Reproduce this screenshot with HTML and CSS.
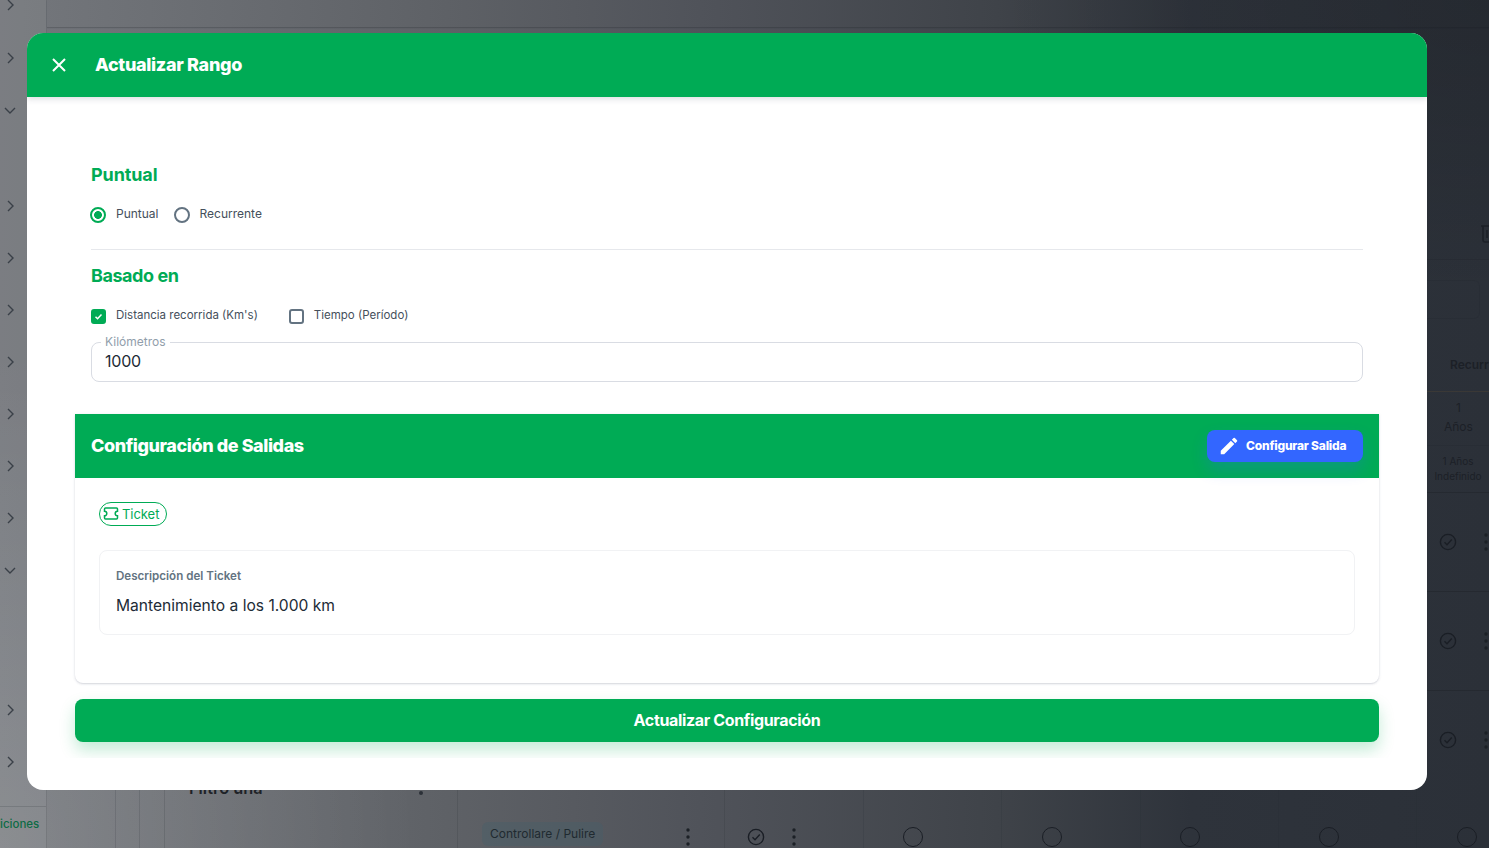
FILE: index.html
```html
<!DOCTYPE html>
<html lang="es">
<head>
<meta charset="utf-8">
<title>Actualizar Rango</title>
<link rel="stylesheet" href="styles.css">
</head>
<body>
<div class="backdrop-page">
  <div class="bg-topbar"></div>
  <aside class="side">
    <svg class="chev c1" viewBox="0 0 10 14"><path d="M3 2l5 5-5 5"/></svg>
    <svg class="chev c2" viewBox="0 0 10 14"><path d="M3 2l5 5-5 5"/></svg>
    <svg class="chev down c3" viewBox="0 0 14 10"><path d="M2 3l5 5 5-5"/></svg>
    <svg class="chev c4" viewBox="0 0 10 14"><path d="M3 2l5 5-5 5"/></svg>
    <svg class="chev c5" viewBox="0 0 10 14"><path d="M3 2l5 5-5 5"/></svg>
    <svg class="chev c6" viewBox="0 0 10 14"><path d="M3 2l5 5-5 5"/></svg>
    <svg class="chev c7" viewBox="0 0 10 14"><path d="M3 2l5 5-5 5"/></svg>
    <svg class="chev c8" viewBox="0 0 10 14"><path d="M3 2l5 5-5 5"/></svg>
    <svg class="chev c9" viewBox="0 0 10 14"><path d="M3 2l5 5-5 5"/></svg>
    <svg class="chev c10" viewBox="0 0 10 14"><path d="M3 2l5 5-5 5"/></svg>
    <svg class="chev down c11" viewBox="0 0 14 10"><path d="M2 3l5 5 5-5"/></svg>
    <svg class="chev c12" viewBox="0 0 10 14"><path d="M3 2l5 5-5 5"/></svg>
    <svg class="chev c13" viewBox="0 0 10 14"><path d="M3 2l5 5-5 5"/></svg>
    <div class="side-foot">iciones</div>
  </aside>
  <span class="bg-text filtro">Filtro una</span>
  <span class="bg-dot"></span>
  <span class="bg-chip">Controllare / Pulire</span>
  <svg class="kebab k1" viewBox="0 0 4 18"><circle cx="2" cy="2" r="1.7"/><circle cx="2" cy="9" r="1.7"/><circle cx="2" cy="16" r="1.7"/></svg>
  <svg class="kebab k2" viewBox="0 0 4 18"><circle cx="2" cy="2" r="1.7"/><circle cx="2" cy="9" r="1.7"/><circle cx="2" cy="16" r="1.7"/></svg>
  <svg class="kebab k3" viewBox="0 0 4 18"><circle cx="2" cy="2" r="1.7"/><circle cx="2" cy="9" r="1.7"/><circle cx="2" cy="16" r="1.7"/></svg>
  <svg class="kebab k4" viewBox="0 0 4 18"><circle cx="2" cy="2" r="1.7"/><circle cx="2" cy="9" r="1.7"/><circle cx="2" cy="16" r="1.7"/></svg>
  <svg class="kebab k5" viewBox="0 0 4 18"><circle cx="2" cy="2" r="1.7"/><circle cx="2" cy="9" r="1.7"/><circle cx="2" cy="16" r="1.7"/></svg>
  <svg class="check ch1" viewBox="0 0 20 20"><circle cx="10" cy="10" r="7.6"/><path d="M6.500 10.300l2.500 2.500 4.800-5.300"/></svg>
  <svg class="check ch2" viewBox="0 0 20 20"><circle cx="10" cy="10" r="7.6"/><path d="M6.500 10.300l2.500 2.500 4.800-5.300"/></svg>
  <svg class="check ch3" viewBox="0 0 20 20"><circle cx="10" cy="10" r="7.6"/><path d="M6.500 10.300l2.500 2.500 4.800-5.300"/></svg>
  <svg class="check ch4" viewBox="0 0 20 20"><circle cx="10" cy="10" r="7.6"/><path d="M6.500 10.300l2.500 2.500 4.800-5.300"/></svg>
  <span class="ring r1"></span><span class="ring r2"></span><span class="ring r3"></span><span class="ring r4"></span><span class="ring r5"></span>
  <span class="bg-text recurr">Recurr</span>
  <span class="bg-text one">1</span>
  <span class="bg-text anos">Años</span>
  <span class="bg-text anos2">1 Años<br>Indefinido</span>
  <svg class="trash" viewBox="0 0 12 20"><path d="M0 2h12M2 2v14a2 2 0 0 0 2 2h8M6 6v8"/></svg>
  <span class="bg-outline"></span>
  <span class="vline v1"></span><span class="vline v2"></span><span class="vline v3"></span><span class="vline v4"></span><span class="vline v5"></span><span class="vline v6"></span><span class="vline v7"></span><span class="vline v8"></span><span class="vline v9"></span><span class="vline v10"></span>
  <span class="hline h0"></span>
  <span class="hline h4"></span>
  <span class="hline h5"></span>
  <span class="hline h1"></span>
  <span class="hline h2"></span>
  <span class="hline h3"></span>
</div>

<main class="modal">
  <header class="modal-head">
    <svg class="close" viewBox="0 0 16 16"><path d="M2 2l12 12M14 2L2 14"/></svg>
    <h1 class="modal-title">Actualizar Rango</h1>
  </header>
  <div class="modal-body">
    <section class="form-area">
      <h2 class="section-title first">Puntual</h2>
      <div class="options radios">
        <label class="opt"><span class="radio on"></span><span>Puntual</span></label>
        <label class="opt"><span class="radio"></span><span>Recurrente</span></label>
      </div>
      <hr class="rule">
      <h2 class="section-title tight">Basado en</h2>
      <div class="options checks">
        <label class="opt"><span class="box on"><svg viewBox="0 0 14 14"><path d="M3.200 7.300l2.600 2.500 5-5.400"/></svg></span><span>Distancia recorrida (Km's)</span></label>
        <label class="opt"><span class="box"></span><span>Tiempo (Período)</span></label>
      </div>
      <div class="field">
        <span class="field-label">Kilómetros</span>
        <span class="field-value">1000</span>
      </div>
    </section>
    <section class="card">
      <div class="card-head">
        <h2 class="card-title">Configuración de Salidas</h2>
        <button class="btn-config">
          <svg viewBox="0 0 24 24"><path d="M3 17.250V21h3.750L17.810 9.940l-3.750-3.750L3 17.250zM20.710 7.040a1 1 0 0 0 0-1.410l-2.340-2.340a1 1 0 0 0-1.410 0l-1.830 1.830 3.750 3.750 1.830-1.830z"/></svg>
          <span class="btn-config-text">Configurar Salida</span>
        </button>
      </div>
      <div class="card-body">
        <span class="tag">
          <svg viewBox="0 0 18 14"><path d="M3.500 1.500h11a1 1 0 0 1 1 1v2.200a2.300 2.300 0 0 0 0 4.600v2.200a1 1 0 0 1-1 1h-11a1 1 0 0 1-1-1V9.300a2.300 2.300 0 0 0 0-4.600V2.500a1 1 0 0 1 1-1z"/></svg>
          Ticket
        </span>
        <div class="desc">
          <div class="desc-label">Descripción del Ticket</div>
          <div class="desc-value">Mantenimiento a los 1.000 km</div>
        </div>
      </div>
    </section>
    <button class="btn-submit">Actualizar Configuración</button>
  </div>
</main>
</body>
</html>
```
FILE: styles.css
```css
* { box-sizing: border-box; }
html, body { margin: 0; height: 100%; overflow: hidden; }
body { font-family: "Inter", "Liberation Sans", sans-serif; background: #fff; }

.backdrop-page {
  position: fixed; inset: 0; overflow: hidden;
  background:
    radial-gradient(ellipse 420px 500px at 0 848px, rgba(255,255,255,.12), rgba(255,255,255,0)),
    radial-gradient(ellipse 500px 300px at 1489px 0, rgba(0,0,0,.14), rgba(0,0,0,0)),
    linear-gradient(90deg, #74777c 0%, #6d7075 10%, #5e6166 30%, #50535a 47%, #3f4349 67%, #2e333b 80%, #2b3038 100%);
}
.bg-topbar { position: absolute; left: 47px; right: 0; top: 0; height: 27px; box-shadow: 0 1px 1px rgba(20,24,30,.2); }
.side { position: absolute; left: 0; top: 0; bottom: 0; width: 47px; border-right: 1px solid rgba(50,55,62,.2); background: rgba(255,255,255,.05); }
.chev { position: absolute; left: 5px; width: 10px; height: 14px; fill: none; stroke: #3a4048; stroke-width: 1.4; }
.chev.down { left: 3px; width: 14px; height: 10px; }
.c1 { top: -2px; } .c2 { top: 51px; } .c3 { top: 105px; } .c4 { top: 199px; } .c5 { top: 251px; }
.c6 { top: 303px; } .c7 { top: 355px; } .c8 { top: 407px; } .c9 { top: 459px; } .c10 { top: 511px; }
.c11 { top: 565px; } .c12 { top: 703px; } .c13 { top: 755px; }
.side-foot { position: absolute; left: 0; right: 0; top: 806px; bottom: 0; border-top: 1px solid rgba(50,55,62,.2); padding-top: 10px; font-size: 11.5px; font-weight: 500; color: #0d6b45; }

.bg-text { position: absolute; color: #24282f; font-size: 12px; }
.filtro { left: 189px; top: 778px; font-size: 16.3px; font-weight: 600; color: #1e2227; height: 10px; overflow: visible; }
.bg-dot { position: absolute; left: 419px; top: 791px; width: 4px; height: 4px; border-radius: 50%; background: #2b3037; }
.bg-chip { position: absolute; left: 482px; top: 822px; height: 24px; padding: 0 8px; line-height: 24px; border-radius: 6px; background: rgba(70,95,105,.4); color: #1f2a30; font-size: 12px; }
.kebab { position: absolute; width: 4px; height: 18px; fill: #1c2026; }
.k1 { left: 686px; top: 828px; } .k2 { left: 792px; top: 828px; }
.k3 { left: 1484px; top: 533px; } .k4 { left: 1484px; top: 632px; } .k5 { left: 1484px; top: 731px; }
.check { position: absolute; width: 20px; height: 20px; fill: none; stroke: #1a1e25; stroke-width: 1.4; }
.ch1 { left: 746px; top: 827px; } .ch2 { left: 1438px; top: 532px; } .ch3 { left: 1438px; top: 631px; } .ch4 { left: 1438px; top: 730px; }
.ring { position: absolute; top: 827px; width: 20px; height: 20px; border-radius: 50%; border: 1.6px solid #1a1e25; }
.r1 { left: 903px; } .r2 { left: 1042px; } .r3 { left: 1180px; } .r4 { left: 1319px; } .r5 { left: 1457px; }
.recurr { left: 1450px; top: 357px; font-weight: 600; color: #1c2027; white-space: nowrap; }
.one { left: 1456px; top: 400px; font-size: 12px; color: #1c2027; }
.anos { left: 1444px; top: 419px; color: #1c2027; }
.anos2 { left: 1434px; top: 454px; width: 48px; font-size: 10px; line-height: 15px; text-align: center; color: #1c2027; }
.trash { position: absolute; left: 1481px; top: 222px; width: 12px; height: 24px; fill: none; stroke: #1c2027; stroke-width: 1.6; }
.bg-outline { position: absolute; left: 1427px; top: 280px; width: 53px; height: 39px; border: 1px solid rgba(20,24,30,.08); border-left: 0; border-radius: 0 6px 6px 0; }
.vline { position: absolute; top: 790px; bottom: 0; width: 1px; background: rgba(40,44,50,.16); }
.v1 { left: 115px; } .v2 { left: 139px; } .v3 { left: 164px; } .v4 { left: 457px; } .v5 { left: 724px; }
.v6 { left: 863px; } .v7 { left: 1001px; } .v8 { left: 1140px; } .v9 { left: 1278px; } .v10 { left: 1416px; }
.hline { position: absolute; left: 1427px; right: 0; height: 1px; background: rgba(20,24,30,.28); }
.h0 { top: 259px; background: rgba(20,24,30,.14); }
.h4 { top: 391px; background: rgba(120,90,50,.2); }
.h5 { top: 445px; background: rgba(20,24,30,.1); }
.h1 { top: 492px; } .h2 { top: 591px; } .h3 { top: 690px; }

.modal {
  position: fixed; left: 27px; top: 33px; width: 1400px; height: 757px;
  background: #fff; border-radius: 16px; overflow: hidden;
}
.modal-head {
  height: 64px; background: #00ab55; display: flex; align-items: center;
  padding-left: 24px; gap: 28px; box-shadow: 0 2px 6px rgba(60,70,90,.18); position: relative;
}
.close { width: 16px; height: 16px; fill: none; stroke: #fff; stroke-width: 2; }
.modal-title { margin: 0; font-size: 18px; line-height: 64px; height: 64px; font-weight: 800; color: #fff; letter-spacing: -.32px; }
.modal-body { height: 661px; padding: 0 48px; display: flex; flex-direction: column; overflow: hidden; }

.form-area { padding: 0 16px; }
.section-title { margin: 0; font-size: 18px; line-height: 22px; font-weight: 700; color: #00ab55; letter-spacing: -.1px; }
.section-title.first { margin-top: 67px; }
.section-title.tight { letter-spacing: -.45px; }
.options { display: flex; font-size: 12px; color: #454f5b; }
.radios { margin-top: 19px; gap: 16px; }
.checks { margin-top: 19px; gap: 31px; font-size: 11.5px; }
.opt { display: flex; align-items: center; gap: 10px; line-height: 18px; }
.radio { width: 16px; height: 16px; border-radius: 50%; border: 2px solid #637381; flex: none; margin-left: -1px; position: relative; top: 1px; }
.radio.on { border-color: #00ab55; background: radial-gradient(circle closest-side, #00ab55 0 3.6px, #fff 4.2px); }
.box { width: 15px; height: 15px; border-radius: 3px; border: 2px solid #637381; flex: none; position: relative; top: 1px; }
.box.on { background: #00ab55; border-color: #00ab55; }
.box svg { display: block; width: 11px; height: 11px; fill: none; stroke: #fff; stroke-width: 1.9; }
.rule { border: 0; border-top: 1px solid #e6e8ec; margin: 26px 0 15px; }
.field { margin-top: 18px; height: 40px; border: 1px solid #d9dce3; border-radius: 8px; position: relative; padding: 0 13px 2px; display: flex; align-items: center; }
.field-label { position: absolute; left: 9px; top: -8px; padding: 0 4px; background: #fff; font-size: 12px; line-height: 14px; color: #919eab; }
.field-value { font-size: 16px; color: #212b36; letter-spacing: -.2px; }

.card { flex: none; margin-top: 32px; height: 269px; border-radius: 0 0 8px 8px; background: #fff; box-shadow: 0 1px 2px rgba(120,125,145,.3), 0 0 4px rgba(120,125,145,.06); display: flex; flex-direction: column; }
.card-head { flex: none; height: 64px; background: #00ab55; display: flex; align-items: center; justify-content: space-between; padding: 0 16px; }
.card-title { margin: 0 0 2px; font-size: 18px; font-weight: 800; color: #fff; letter-spacing: -.43px; }
.btn-config { height: 32px; width: 156px; border: 0; border-radius: 8px; background: #3366ff; color: #fff; font: 800 12px "Inter", "Liberation Sans", sans-serif; letter-spacing: -.2px; display: flex; align-items: center; gap: 6px; padding: 0 0 0 11px; box-shadow: 0 8px 16px rgba(51,102,255,.24); }
.btn-config svg { width: 22px; height: 22px; fill: #fff; flex: none; }
.btn-config-text { margin-bottom: 2px; }
.card-body { padding: 24px; }
.tag { display: inline-flex; align-items: center; gap: 2px; height: 24px; border: 1px solid #00ab55; border-radius: 12px; padding: 0 7px 1px 2px; color: #00ab55; font-size: 13px; line-height: 22px; letter-spacing: -.05px; }
.tag svg { width: 18px; height: 15px; fill: none; stroke: #00ab55; stroke-width: 1.5; }
.desc { margin-top: 24px; height: 85px; border: 1px solid #f1f2f4; border-radius: 8px; padding: 16px; }
.desc-label { font-size: 11.6px; line-height: 18px; font-weight: 600; color: #637381; }
.desc-value { margin-top: 11px; font-size: 15.6px; line-height: 20px; color: #212b36; }

.btn-submit { flex: none; margin-top: 16px; height: 43px; border: 0; border-radius: 8px; background: #00ab55; color: #fff; font: 700 16px "Inter", "Liberation Sans", sans-serif; letter-spacing: -.35px; padding: 0 0 2px; box-shadow: 0 8px 16px rgba(0,171,85,.24); }
```
